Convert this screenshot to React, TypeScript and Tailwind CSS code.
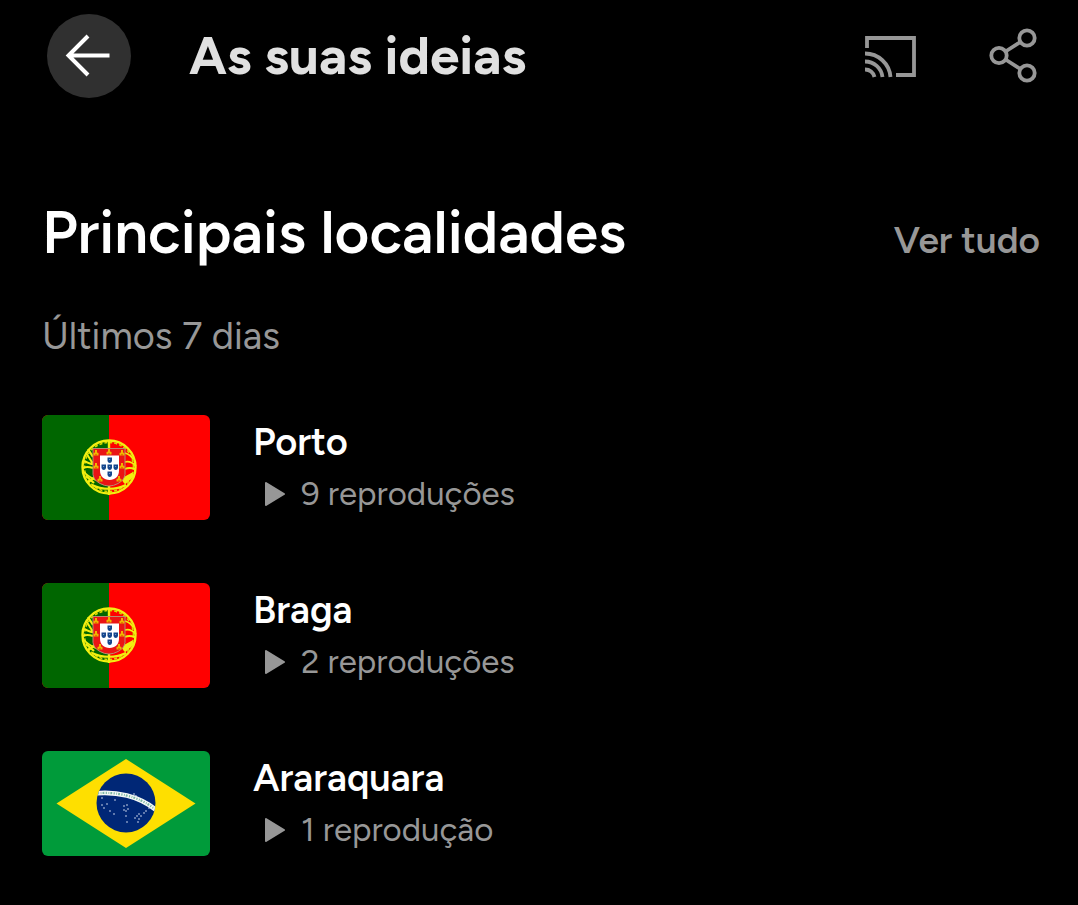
import React from 'react';

type Country = 'pt' | 'br';

interface Place {
    name: string;
    country: Country;
    plays: string;
}

const places: Place[] = [
    { name: 'Porto', country: 'pt', plays: '9 reproduções' },
    { name: 'Braga', country: 'pt', plays: '2 reproduções' },
    { name: 'Araraquara', country: 'br', plays: '1 reprodução' },
];

const castles = [
    [54, 38], [67, 37], [80, 38], [54, 51], [80, 51], [58, 64], [77, 64],
];

const escutcheons = [
    [67, 45], [61, 52], [67, 52], [73, 52], [67, 59],
];

const stars = [
    [60, 54], [62, 57], [65, 53], [68, 60], [72, 63], [73, 49], [82, 55], [85, 54], [86, 58],
    [84, 60], [82, 59], [84, 65], [93, 67], [95, 65], [97, 68], [97, 63], [99, 65], [102, 62],
    [104, 60], [107, 57], [92, 43], [94, 45], [96, 71], [60, 47], [85, 71],
];

const PortugalFlag = () => (
    <svg viewBox="0 0 168 105" className="h-[105px] w-[168px] shrink-0 rounded-md" role="img" aria-label="Portugal">
        <rect width="168" height="105" fill="#ff0000" />
        <rect width="67" height="105" fill="#006600" />
        <g fill="none" stroke="#f2ee10">
            <circle cx="67" cy="52" r="26.5" strokeWidth="2.4" />
            <circle cx="67" cy="52" r="24.5" strokeWidth="1.6" strokeDasharray="3 2" stroke="#d8d800" />
            <path d="M67 25v9M67 71v9" strokeWidth="2.4" />
            <path d="M44 38c4 5 5 9 7 10M42 46c4 2 6 3 9 3M41 53c4-2 7-1 10 0M42 57c4 5 14 10 25 11" strokeWidth="2" />
            <path d="M46 34l5 8M45 68l8-6M44 61l8 7M50 70c10 5 24 5 34 0" strokeWidth="2.2" />
            <path d="M83 38c4 1 6 3 8 6M83 47c4-1 7 0 11 4M83 54c4-2 7-1 10 0" strokeWidth="1.8" />
            <path d="M82 68l9-8M80 65l11-6" strokeWidth="3.4" />
        </g>
        <path d="M51 33.500h32v26q-1 6-7 9-9 5-18 0-6-3-7-9z" fill="#ea1414" stroke="#b98a70" strokeWidth="1" />
        {castles.map(([x, y]) => (
            <g key={`${x}-${y}`}>
                <path
                    d={`M${x - 2.5} ${y + 2.5}v-2.500l1.500-.5v-2.500h2v2.500l1.500.5v2.500z`}
                    fill="#f0b400"
                />
                <rect x={x - 0.5} y={y + 1} width="1" height="1.5" fill="#d04800" />
            </g>
        ))}
        <path d="M58 40.500h19v15c0 6-4 9.500-9.500 9.500S58 61.500 58 55.500z" fill="#ffffff" />
        {escutcheons.map(([x, y]) => (
            <g key={`${x}-${y}`}>
                <path d={`M${x - 1.5} ${y - 2.5}h4.500v3.500q-.5 2-2.250 2t-2.250-2z`} fill="#14468c" />
                <circle cx={x + 0.7} cy={y - 0.5} r="0.5" fill="#a9c0e4" />
            </g>
        ))}
    </svg>
);

const BrazilFlag = () => (
    <svg viewBox="0 0 168 105" className="h-[105px] w-[168px] shrink-0 rounded-md" role="img" aria-label="Brasil">
        <defs>
            <clipPath id="globe">
                <circle cx="84" cy="52" r="29.5" />
            </clipPath>
        </defs>
        <rect width="168" height="105" fill="#009b3a" />
        <path d="M84 8L153.500 52.500 84 97 14.500 52.500z" fill="#fedf00" />
        <circle cx="84" cy="52" r="29.5" fill="#002776" />
        <g clipPath="url(#globe)" fill="none">
            <path d="M52 42.500C74 40 97 45 114 59" stroke="#f4f8f6" strokeWidth="4.6" />
            <path d="M56 42.300C75 40.500 97 45.500 112 57.500" stroke="#7db8a4" strokeWidth="2.2" strokeDasharray="1.2 1.5 0.8 1.1 1.8 1.4" />
        </g>
        <g fill="#dbe4f4">
            {stars.map(([x, y]) => (
                <circle key={`${x}-${y}`} cx={x} cy={y} r="0.8" />
            ))}
        </g>
    </svg>
);

const BackIcon = () => (
    <svg viewBox="0 0 84 84" className="size-full" fill="none" stroke="#ffffff" strokeWidth="4" aria-hidden="true">
        <path d="M62.500 41.500H21M41 22L21.500 41.500 41 61" />
    </svg>
);

const CastIcon = () => (
    <svg viewBox="0 0 52 44" className="h-11 w-[52px]" fill="none" stroke="#979797" strokeWidth="3.8" aria-hidden="true">
        <path d="M2 14V4h47v37H31" />
        <path d="M0 19.500A25.500 25.500 0 0 1 25.500 43M0 27.500A17.500 17.500 0 0 1 17.500 43M0 35.500A9.500 9.500 0 0 1 9.500 43" />
    </svg>
);

const ShareIcon = () => (
    <svg viewBox="0 0 48 56" className="h-14 w-12" fill="none" stroke="#979797" strokeWidth="3.8" aria-hidden="true">
        <circle cx="38" cy="10" r="7.7" />
        <circle cx="10" cy="27.5" r="7.7" />
        <circle cx="38" cy="45" r="7.7" />
        <path d="M16.500 23.500l15-9.500M16.500 31.500l15 9.500" />
    </svg>
);

const PlayIcon = () => (
    <svg viewBox="0 0 20 24" className="h-6 w-5" fill="#979797" stroke="#979797" strokeWidth="2" strokeLinejoin="round" aria-hidden="true">
        <path d="M1 1l18 11L1 23z" />
    </svg>
);

const PlaceRow: React.FC<{ place: Place }> = ({ place }) => (
    <li className="flex items-center gap-[43px]">
        {place.country === 'pt' ? <PortugalFlag /> : <BrazilFlag />}
        <div>
            <h3 className="text-[38px] leading-[52px] font-semibold text-white">{place.name}</h3>
            <p className="flex items-center gap-4 pl-3 text-[33px] leading-[52px]">
                <PlayIcon />
                <span>{place.plays}</span>
            </p>
        </div>
    </li>
);

const App = () => (
    <div className="min-h-screen bg-black font-['Figtree','Inter',sans-serif] text-[#979797]">
        <header className="flex items-center pt-3.5 pr-[41px] pl-[47px]">
            <button type="button" aria-label="Voltar" className="size-[84px] shrink-0 rounded-full bg-[#303030]">
                <BackIcon />
            </button>
            <h1 className="ml-[58px] flex-1 text-[53px] leading-[64px] font-bold text-[#e0e0e0]">As suas ideias</h1>
            <div className="flex items-center gap-[72px]">
                <button type="button" aria-label="Transmitir">
                    <CastIcon />
                </button>
                <button type="button" aria-label="Partilhar">
                    <ShareIcon />
                </button>
            </div>
        </header>

        <main className="pt-[102px] pr-[38px] pb-12 pl-[42px]">
            <div className="flex items-baseline justify-between">
                <h2 className="text-[60px] leading-[64px] font-semibold text-white">Principais localidades</h2>
                <a href="#todas" className="text-[37px] leading-[48px] font-semibold">
                    Ver tudo
                </a>
            </div>
            <p className="mt-12 text-[38px] leading-[48px]">Últimos 7 dias</p>
            <ul className="mt-[55px] flex flex-col gap-[63px]">
                {places.map((place) => (
                    <PlaceRow key={place.name} place={place} />
                ))}
            </ul>
        </main>
    </div>
);

export default App;
